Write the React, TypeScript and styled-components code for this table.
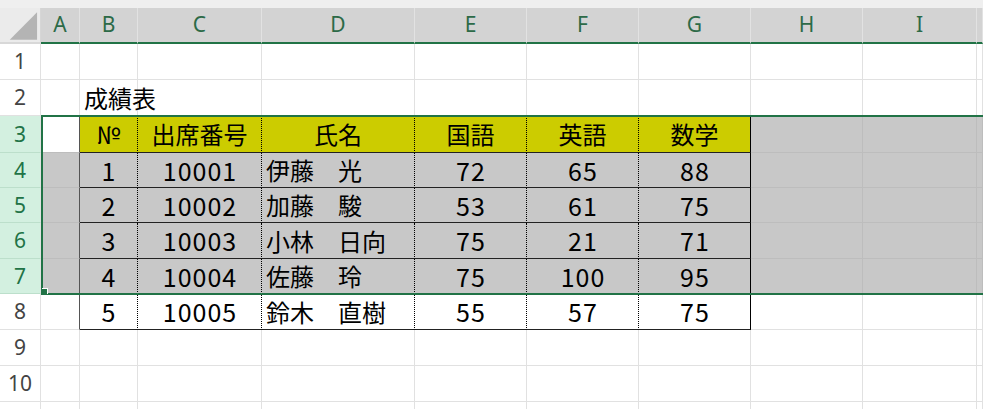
import React from 'react';
import styled, { createGlobalStyle } from 'styled-components';

const GREEN = '#217346';
const GRID = '#e1e1e1';
const SEL_BG = '#c8c8c8';
const SEL_GRID = '#bdbdbd';
const YELLOW = '#cccc00';
const TEMPLATE = '41px 39px 58px 124px 153px 112px 112px 112px 112px 114px 1fr';

const Global = createGlobalStyle`
  html, body { margin: 0; padding: 0; background: #fff; overflow: hidden; }
`;

const Sheet = styled.div`
  position: relative;
  width: 983px;
  height: 409px;
  overflow: hidden;
  background: #fff;
`;

const TopStrip = styled.div`
  height: 8px;
  background: #efefef;
`;

const Row = styled.div<{ $h: number }>`
  display: grid;
  grid-template-columns: ${TEMPLATE};
  height: ${(p) => p.$h}px;
`;

const Corner = styled.div`
  box-sizing: border-box;
  background: #ebebeb;
  border-right: 1px solid #d6d6d6;
  border-bottom: 2px solid #d8d8d8;
  display: flex;
`;

const ColHeader = styled.div`
  box-sizing: border-box;
  background: #d3d3d3;
  border-right: 1px solid #e2e2e2;
  border-bottom: 2px solid ${GREEN};
  color: #2c6a47;
  font-family: 'Noto Sans', sans-serif;
  font-size: 21px;
  line-height: 1;
  display: flex;
  align-items: center;
  justify-content: center;
  padding-bottom: 2px;
  overflow: hidden;
`;

const RowHeader = styled.div<{ $sel: boolean }>`
  box-sizing: border-box;
  background: ${(p) => (p.$sel ? '#d3f0e0' : '#fff')};
  color: ${(p) => (p.$sel ? GREEN : '#444')};
  border-bottom: 1px solid ${(p) => (p.$sel ? '#bcdfcb' : GRID)};
  border-right: 1px solid ${GRID};
  font-family: 'Noto Sans', sans-serif;
  font-size: 21px;
  line-height: 1;
  display: flex;
  align-items: center;
  justify-content: center;
`;

const Cell = styled.div<{ $bg: string; $rb: string; $bb: string; $left: boolean; $num: boolean }>`
  box-sizing: border-box;
  position: relative;
  min-width: 0;
  background: ${(p) => p.$bg};
  border-right: ${(p) => p.$rb};
  border-bottom: ${(p) => p.$bb};
  display: flex;
  align-items: center;
  justify-content: ${(p) => (p.$left ? 'flex-start' : 'center')};
  padding-left: ${(p) => (p.$left ? '4px' : p.$num ? '1px' : '0')};
  font-family: 'Noto Sans CJK JP', 'Noto Sans', sans-serif;
  font-size: ${(p) => (p.$num ? '25px' : '24px')};
  letter-spacing: ${(p) => (p.$num ? '1px' : '0')};
  line-height: 1;
  color: #000;
  white-space: nowrap;
  overflow: visible;
`;

const Selection = styled.div`
  position: absolute;
  left: 41px;
  top: 115px;
  width: 990px;
  height: 180px;
  box-sizing: border-box;
  border: 2px solid ${GREEN};
  pointer-events: none;
`;

const FillHandle = styled.div`
  position: absolute;
  left: 41px;
  top: 289px;
  width: 6px;
  height: 6px;
  background: ${GREEN};
  box-shadow: 1px -1px 0 #fff;
`;

const COLS = ['A', 'B', 'C', 'D', 'E', 'F', 'G', 'H', 'I', ''];
const HEIGHTS = [36, 36, 37, 35, 35, 36, 35, 36, 36, 36, 36];

const DATA: Record<number, string[]> = {
  2: ['', '成績表'],
  3: ['', '№', '出席番号', '氏名', '国語', '英語', '数学'],
  4: ['', '1', '10001', '伊藤　光', '72', '65', '88'],
  5: ['', '2', '10002', '加藤　駿', '53', '61', '75'],
  6: ['', '3', '10003', '小林　日向', '75', '21', '71'],
  7: ['', '4', '10004', '佐藤　玲', '75', '100', '95'],
  8: ['', '5', '10005', '鈴木　直樹', '55', '57', '75'],
};

function cellProps(r: number, c: number, v: string) {
  const selected = r >= 3 && r <= 7;
  const inTable = r >= 3 && r <= 8 && c >= 1 && c <= 6;
  let bg = 'transparent';
  if (r === 3 && c >= 1 && c <= 6) bg = YELLOW;
  else if (selected && !(r === 3 && c === 0)) bg = SEL_BG;
  const grid = selected ? SEL_GRID : GRID;
  let rb = `1px solid ${grid}`;
  if (inTable) rb = c === 6 ? '1px solid #000' : '1px dotted #000';
  else if (c === 0 && r >= 3 && r <= 8) rb = '1px solid #555';
  let bb = `1px solid ${grid}`;
  if (inTable || (r === 2 && c >= 1 && c <= 6)) bb = '1px solid #222';
  const left = (c === 3 && r >= 4 && r <= 8) || (r === 2 && c === 1);
  const num = /^[0-9]+$/.test(v);
  return { $bg: bg, $rb: rb, $bb: bb, $left: left, $num: num };
}

const Triangle = () => (
  <svg width="41" height="34" viewBox="0 0 41 34">
    <polygon points="10,32 38,32 38,4" fill="#b4b4b4" />
  </svg>
);

export default function App() {
  return (
    <>
      <Global />
      <Sheet>
        <TopStrip />
        <Row $h={36}>
          <Corner>
            <Triangle />
          </Corner>
          {COLS.map((c, i) => (
            <ColHeader key={i}>{c}</ColHeader>
          ))}
        </Row>
        {HEIGHTS.map((h, i) => {
          const r = i + 1;
          const vals = DATA[r] || [];
          return (
            <Row key={r} $h={h}>
              <RowHeader $sel={r >= 3 && r <= 7}>{r <= 10 ? r : ''}</RowHeader>
              {COLS.map((_, c) => {
                const v = vals[c] || '';
                return (
                  <Cell key={c} {...cellProps(r, c, v)}>
                    {v}
                  </Cell>
                );
              })}
            </Row>
          );
        })}
        <Selection />
        <FillHandle />
      </Sheet>
    </>
  );
}
